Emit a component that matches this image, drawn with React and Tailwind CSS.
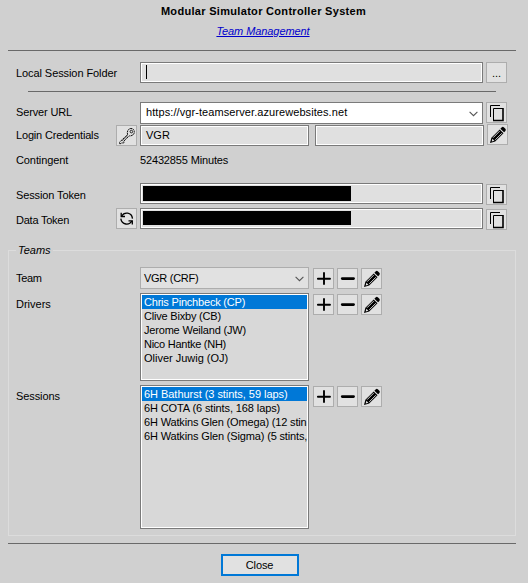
import React from "react";

function IconButton({ children, className = "" }) {
  return (
    <button className={`flex h-[21px] w-[21px] shrink-0 items-center justify-center border border-[#adadad] bg-[#e1e1e1] ${className}`}>
      {children}
    </button>
  );
}

function CopyIcon() {
  return (
    <svg width="19" height="19" viewBox="1 1 19 19" fill="none" stroke="#000">
      <path d="M14 3.5H4.5V15" />
      <path d="M7.5 18.5V6.5H17" />
      <path d="M17 6V18.5H7" strokeWidth="1.6" />
    </svg>
  );
}

function PencilIcon() {
  return (
    <svg width="19" height="19" viewBox="1 1 19 19" fill="none">
      <path d="M3 19L4.4 13.7L12.7 5.4L16.5 9.2L8.2 17.5Z" fill="#000" />
      <path d="M13.4 4.7L14.8 3.3Q15.8 2.4 17 3.4L18.4 4.8Q19.3 5.8 18.4 6.9L17.1 8.3Z" fill="#000" />
      <path d="M6.1 13.7L12.7 7.1M8.3 15.8L14.9 9.2" stroke="#e1e1e1" strokeWidth="0.9" />
      <path d="M4.7 17.4L5.4 14.7L7.4 16.7Z" fill="#e1e1e1" />
    </svg>
  );
}

function PlusIcon() {
  return (
    <svg width="19" height="19" viewBox="1 1 19 19" stroke="#000" strokeWidth="1.9" strokeLinecap="round">
      <path d="M4.9 10.8H17M11 4.9V16" />
    </svg>
  );
}

function MinusIcon() {
  return (
    <svg width="19" height="19" viewBox="1 1 19 19" stroke="#000" strokeWidth="2.6" strokeLinecap="round">
      <path d="M5.2 10.6H16.6" />
    </svg>
  );
}

function KeyIcon() {
  return (
    <svg width="19" height="19" viewBox="1 1 19 19" fill="none" stroke="#111" strokeWidth="1">
      <path d="M11.6 9.6C10.6 6.4 12.3 3.6 15 3.5C17.3 3.5 18.6 5.3 18.3 7.4C18 9.8 15.6 11.2 13.2 10.9L7.7 16.3L8.2 17.3L6.9 18.3L5.9 17.6L5.2 18.6H3.5V17.2Z" strokeDasharray="1.9 0.5" />
      <circle cx="15.4" cy="6.6" r="1.3" strokeWidth="0.9" />
      <path d="M6 16L11.8 10.6" strokeWidth="0.6" />
    </svg>
  );
}

function RefreshIcon() {
  return (
    <svg width="19" height="19" viewBox="1 1 19 19" fill="none" stroke="#000" strokeWidth="1.3">
      <path d="M5.6 8.2C8.2 3.6 15.6 4 16.5 10.6" />
      <path d="M15.8 13C13.4 17.6 5.8 17.2 4.8 10.6" />
      <path d="M5.2 4.7V8.5H9" />
      <path d="M16.3 16.6V12.8H12.5" />
    </svg>
  );
}

function Chevron({ className = "" }) {
  return (
    <svg className={className} width="9" height="6" viewBox="0 0 9 6" fill="none" stroke="#555" strokeWidth="1.1">
      <path d="M0.6 0.8L4.5 4.7L8.4 0.8" />
    </svg>
  );
}

function Field({ children, className = "" }) {
  return (
    <div className={`flex h-[21px] shrink-0 border border-[#7a7a7a] bg-[#e0e0e0] shadow-[inset_0_0_0_1px_#fff] ${className}`}>
      {children}
    </div>
  );
}

function Label({ children, className = "" }) {
  return <div className={`shrink-0 pl-2 leading-[14px] ${className}`}>{children}</div>;
}

function Actions() {
  return (
    <div className="ml-1 mt-px flex gap-[3px]">
      <IconButton><PlusIcon /></IconButton>
      <IconButton><MinusIcon /></IconButton>
      <IconButton><PencilIcon /></IconButton>
    </div>
  );
}

function ListBox({ items }) {
  return (
    <ul className="w-[169px] shrink-0 border border-[#7a7a7a] bg-[#d8d8d8] p-px shadow-[inset_0_0_0_1px_#fff]">
      {items.map(([text, spacing], i) => (
        <li key={text} className={`h-[14px] whitespace-nowrap pl-[2px] leading-[14px] ${spacing} ${i === 0 ? "bg-[#0078d7] text-white" : ""}`}>
          {text}
        </li>
      ))}
    </ul>
  );
}

const drivers = [
  ["Chris Pinchbeck (CP)", "tracking-[-0.2px]"],
  ["Clive Bixby (CB)", "tracking-[-0.2px]"],
  ["Jerome Weiland (JW)", "tracking-[-0.19px]"],
  ["Nico Hantke (NH)", "tracking-[-0.26px]"],
  ["Oliver Juwig (OJ)", "tracking-[-0.01px]"],
];

const sessions = [
  ["6H Bathurst (3 stints, 59 laps)", "tracking-[-0.04px]"],
  ["6H COTA (6 stints, 168 laps)", "tracking-[-0.11px]"],
  ["6H Watkins Glen (Omega) (12 stin", "tracking-[-0.16px]"],
  ["6H Watkins Glen (Sigma) (5 stints,", "tracking-[-0.15px]"],
];

export default function App() {
  return (
    <div className="flex h-[583px] w-[528px] flex-col overflow-hidden bg-[#d0d0d0] px-2 font-['Liberation_Sans',Arial,sans-serif] text-[11px] text-black">
      <h1 className="mt-1 h-[14px] pr-px text-center font-bold leading-[14px] tracking-[0.31px]">Modular Simulator Controller System</h1>
      <div className="mt-[6px] h-[14px] pr-[2px] text-center italic leading-[14px] tracking-[-0.08px] text-[#0000cc]">
        <span className="underline">Team Management</span>
      </div>
      <div className="mr-1 mt-3 h-px shrink-0 bg-[#696969]" />

      <div className="mt-[11px] flex h-[21px] shrink-0">
        <Label className="w-[132px] pt-1 tracking-[-0.08px]">Local Session Folder</Label>
        <Field className="w-[343px] pl-[5px] pt-[2px]"><div className="h-[14px] w-px bg-black" /></Field>
        <IconButton className="ml-[3px]"><span className="leading-[14px]">...</span></IconButton>
      </div>
      <div className="ml-5 mt-2 h-px w-[468px] shrink-0 bg-[#696969]" />

      <div className="mt-[10px] flex h-[22px] shrink-0">
        <Label className="w-[132px] pt-[3px] tracking-[-0.15px]">Server URL</Label>
        <div className="flex h-[22px] w-[343px] items-center justify-between border border-[#7a7a7a] bg-white pl-[5px] pr-1">
          <span className="mb-[2px] tracking-[0.08px]">https://vgr-teamserver.azurewebsites.net</span>
          <Chevron className="mt-[2px]" />
        </div>
        <IconButton className="ml-[3px]"><CopyIcon /></IconButton>
      </div>
      <div className="flex h-[22px] shrink-0 pt-px">
        <Label className="w-[108px] pt-[3px] tracking-[-0.17px]">Login Credentials</Label>
        <IconButton><KeyIcon /></IconButton>
        <Field className="ml-[3px] w-[169px] pl-[5px] pt-[2px] leading-[14px]">VGR</Field>
        <Field className="ml-[6px] w-[169px]" />
        <IconButton className="-mt-px ml-[3px]"><PencilIcon /></IconButton>
      </div>
      <div className="mt-[7px] flex h-[14px] shrink-0">
        <Label className="w-[132px] tracking-[-0.1px]">Contingent</Label>
        <span className="leading-[14px] tracking-[-0.15px]">52432855 Minutes</span>
      </div>

      <div className="mt-4 flex h-[21px] shrink-0">
        <Label className="w-[132px] pt-[5px] tracking-[-0.12px]">Session Token</Label>
        <Field className="w-[343px] p-[2px]"><div className="h-[15px] w-[208px] bg-black" /></Field>
        <IconButton className="ml-[3px] mt-px"><CopyIcon /></IconButton>
      </div>
      <div className="mt-1 flex h-[21px] shrink-0">
        <Label className="w-[108px] pt-[5px] tracking-[-0.23px]">Data Token</Label>
        <IconButton><RefreshIcon /></IconButton>
        <Field className="ml-[3px] w-[343px] p-[2px]"><div className="h-[14px] w-[208px] bg-black" /></Field>
        <IconButton className="ml-[3px] mt-px"><CopyIcon /></IconButton>
      </div>

      <fieldset className="mr-1 mt-[14px] h-[293px] shrink-0">
        <div className="flex h-[14px] items-center">
          <div className="h-[7px] w-2 self-end border-l border-t border-[#dcdcdc]" />
          <span className="px-[2px] italic leading-[14px]">Teams</span>
          <div className="h-[7px] grow self-end border-r border-t border-[#dcdcdc]" />
        </div>
        <div className="h-[279px] border-x border-b border-[#dcdcdc] pt-[10px]">
          <div className="flex h-[22px]">
            <Label className="-ml-px w-[132px] pt-1 tracking-[-0.3px]">Team</Label>
            <div className="flex w-[169px] items-center justify-between border border-[#adadad] bg-[#e1e1e1] pl-[3px] pr-1">
              <span className="tracking-[-0.28px]">VGR (CRF)</span>
              <Chevron className="mt-[2px]" />
            </div>
            <Actions />
          </div>
          <div className="mt-1 flex h-[88px]">
            <Label className="-ml-px w-[132px] pt-1">Drivers</Label>
            <ListBox items={drivers} />
            <Actions />
          </div>
          <div className="mt-1 flex h-[144px]">
            <Label className="-ml-px w-[132px] pt-1 tracking-[-0.1px]">Sessions</Label>
            <ListBox items={sessions} />
            <Actions />
          </div>
        </div>
      </fieldset>

      <div className="mr-1 mt-[7px] h-px shrink-0 bg-[#696969]" />
      <button className="ml-[213px] mt-[10px] h-[22px] w-[78px] shrink-0 border-2 border-[#0078d7] bg-[#e1e1e1] pr-px leading-[14px] tracking-[-0.1px]">Close</button>
    </div>
  );
}
